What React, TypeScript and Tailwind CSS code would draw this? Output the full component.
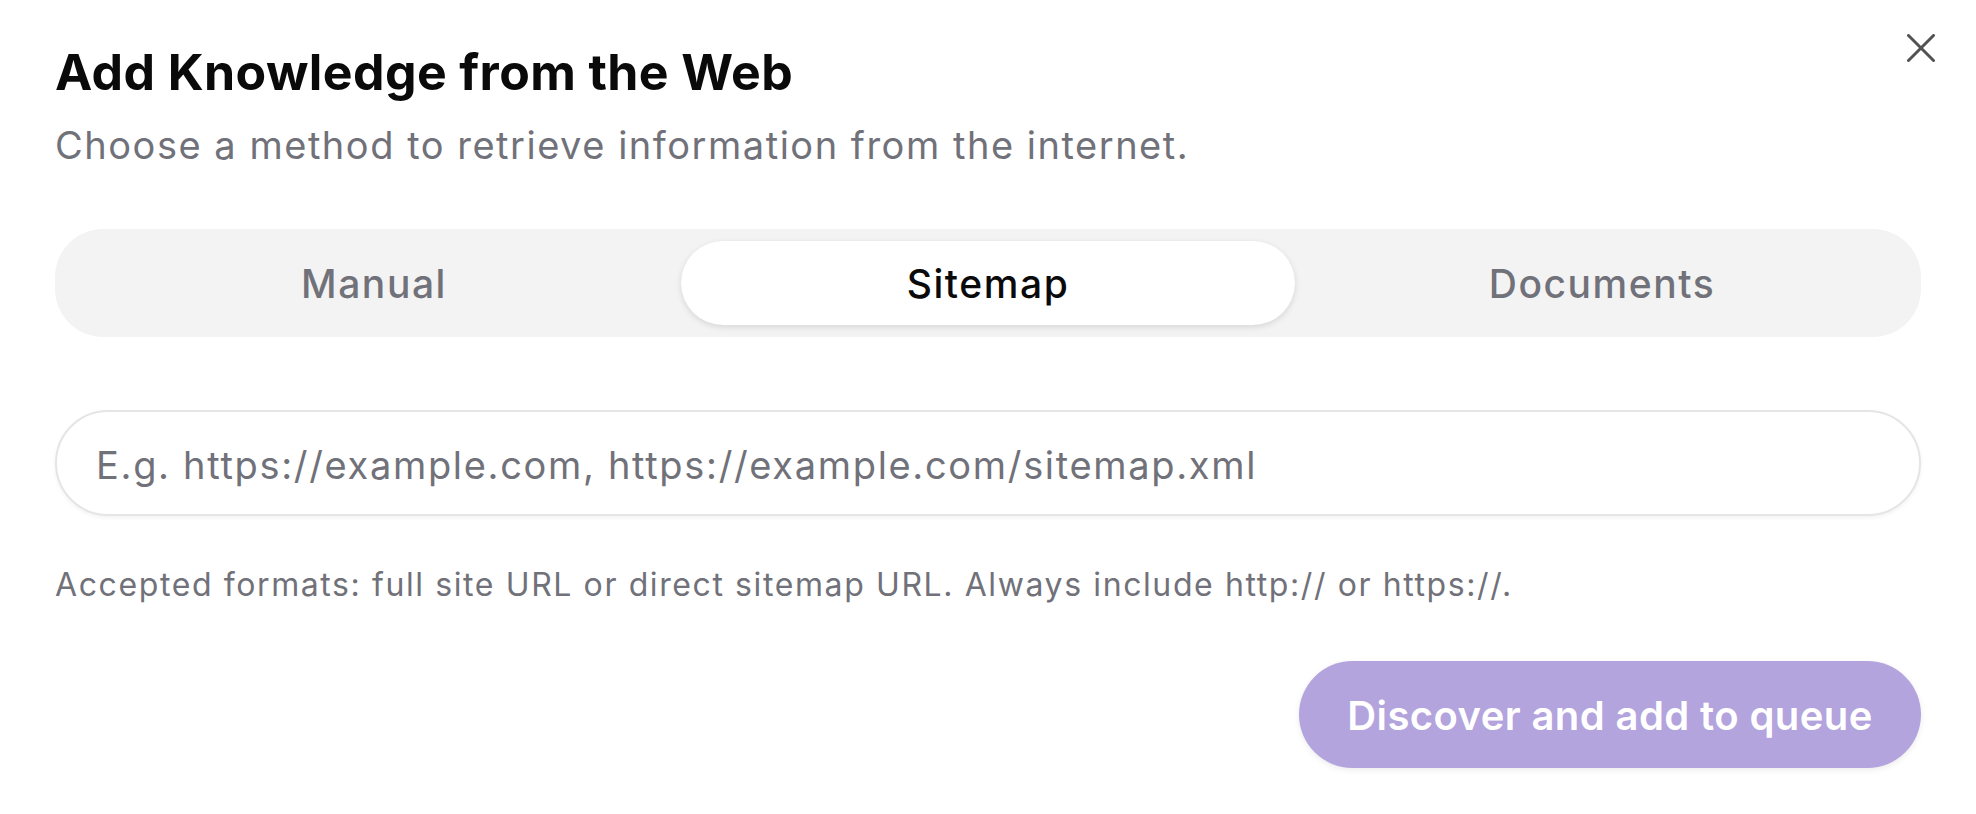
const tabs = ['Manual', 'Sitemap', 'Documents'];

const CloseIcon = () => (
    <svg width="28" height="28" viewBox="0 0 28 28" fill="none" stroke="#525252" strokeWidth="3" strokeLinecap="round">
        <path d="M1.5 1.5L26.5 26.5" />
        <path d="M26.5 1.5L1.5 26.5" />
    </svg>
);

const App = () => {
    const active = 'Sitemap';

    return (
        <div className="relative min-h-[814px] w-full bg-white px-[55px] pt-[42px] font-['Inter',sans-serif]">
            <button className="absolute right-[41px] top-[34px]" aria-label="Close">
                <CloseIcon />
            </button>

            <h1 className="text-[50px] font-bold leading-[60px] tracking-[0.008em] text-[#0a0a0a]">
                Add Knowledge from the Web
            </h1>
            <p className="mt-[20px] text-[38px] leading-[46px] tracking-[0.04em] text-[#71717a]">
                Choose a method to retrieve information from the internet.
            </p>

            <div className="mt-[61px] grid grid-cols-3 rounded-[48px] bg-[#f3f3f3] p-[12px]">
                {tabs.map((tab) => (
                    <div
                        key={tab}
                        className={
                            tab === active
                                ? 'flex h-[84px] items-center justify-center rounded-full bg-white pt-[2px] text-[39px] font-medium tracking-[0.04em] text-[#0a0a0a] shadow-[0_2px_6px_rgba(0,0,0,0.12)]'
                                : 'flex h-[84px] items-center justify-center rounded-full pt-[2px] text-[39px] font-medium tracking-[0.04em] text-[#71717a]'
                        }
                    >
                        {tab}
                    </div>
                ))}
            </div>

            <input
                type="text"
                placeholder="E.g. https://example.com, https://example.com/sitemap.xml"
                className="mt-[73px] block h-[106px] w-full rounded-[53px] border-2 border-[#e5e5e5] bg-white pb-[3px] pl-[39px] pr-[39px] pt-[7px] text-[38px] tracking-[0.044em] text-[#0a0a0a] shadow-[0_2px_4px_rgba(0,0,0,0.05)] outline-none placeholder:text-[#71717a]"
            />

            <p className="mt-[50px] text-[32px] leading-[38px] tracking-[0.05em] text-[#71717a]">
                Accepted formats: full site URL or direct sitemap URL. Always include http:// or https://.
            </p>

            <div className="mt-[57px] flex justify-end">
                <button className="h-[107px] w-[622px] rounded-full bg-[#b3a4de] pt-[2px] text-[40px] font-semibold tracking-[0.01em] text-white shadow-[0_2px_6px_rgba(0,0,0,0.08)]">
                    Discover and add to queue
                </button>
            </div>
        </div>
    );
};

export default App;
